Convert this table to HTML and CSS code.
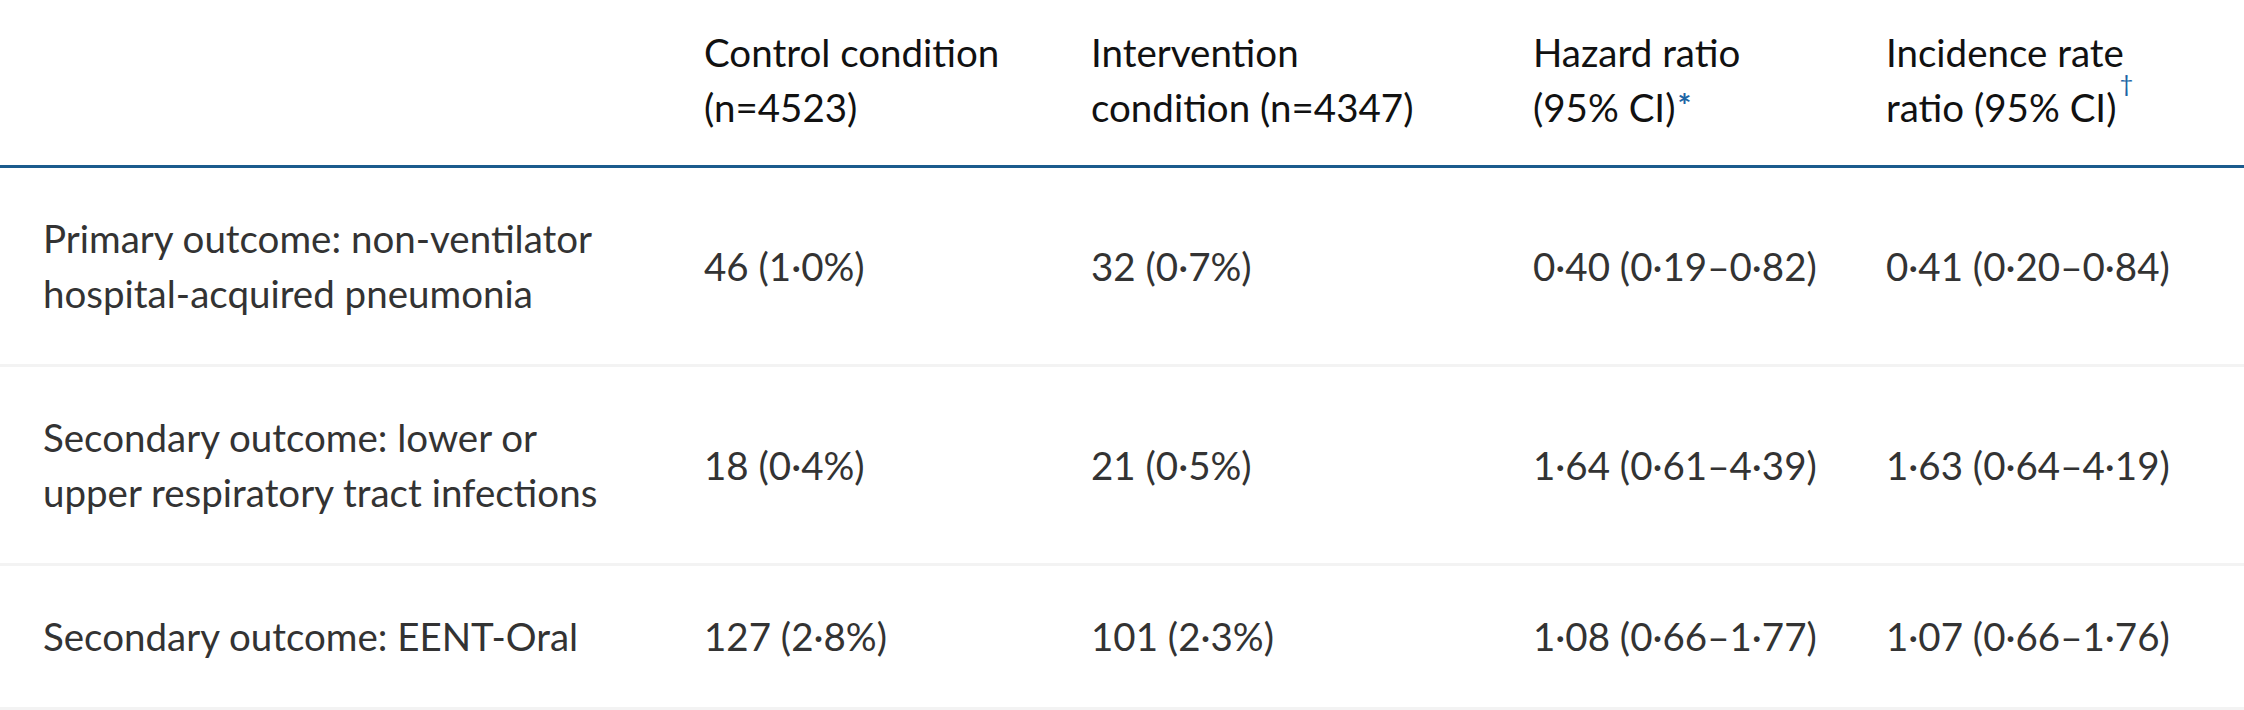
FILE: index.html
```html
<!DOCTYPE html>
<html lang="en">
<head>
<meta charset="utf-8">
<title>Outcomes</title>
<link rel="stylesheet" href="styles.css">
</head>
<body>
<table class="outcomes">
  <colgroup>
    <col class="c-label">
    <col class="c-control">
    <col class="c-interv">
    <col class="c-hr">
    <col class="c-irr">
  </colgroup>
  <thead>
    <tr>
      <th></th>
      <th>Control condition<br>(n=4523)</th>
      <th>Intervention<br>condition (n=4347)</th>
      <th>Hazard ratio<br>(95% CI)<sup class="fn star">*</sup></th>
      <th>Incidence rate<br>ratio (95% CI)<sup class="fn dagger">†</sup></th>
    </tr>
  </thead>
  <tbody>
    <tr>
      <td class="label">Primary outcome: non-ventilator hospital-acquired pneumonia</td>
      <td>46 (1·0%)</td>
      <td>32 (0·7%)</td>
      <td>0·40 (0·19–0·82)</td>
      <td>0·41 (0·20–0·84)</td>
    </tr>
    <tr>
      <td class="label">Secondary outcome: lower or upper respiratory tract infections</td>
      <td>18 (0·4%)</td>
      <td>21 (0·5%)</td>
      <td>1·64 (0·61–4·39)</td>
      <td>1·63 (0·64–4·19)</td>
    </tr>
    <tr>
      <td class="label">Secondary outcome: EENT-Oral</td>
      <td>127 (2·8%)</td>
      <td>101 (2·3%)</td>
      <td>1·08 (0·66–1·77)</td>
      <td>1·07 (0·66–1·76)</td>
    </tr>
  </tbody>
</table>
</body>
</html>
```

FILE: styles.css
```css
html, body {
  margin: 0;
  padding: 0;
  background: #ffffff;
}

body {
  font-family: Lato, "Open Sans", "Liberation Sans", sans-serif;
}

.outcomes {
  width: 100%;
  border-collapse: collapse;
  table-layout: fixed;
}

.c-label { width: 661px; }
.c-control { width: 387px; }
.c-interv { width: 442px; }
.c-hr { width: 353px; }
.c-irr { width: auto; }

.outcomes th,
.outcomes td {
  text-align: left;
  font-size: 38.5px;
  font-weight: 400;
  line-height: 55px;
  padding-left: 43px;
  padding-right: 20px;
  vertical-align: middle;
}

.outcomes th {
  color: #111111;
  padding-top: 25px;
  padding-bottom: 30px;
  border-bottom: 3px solid #1b5b8d;
}

.outcomes td {
  color: #333333;
  padding-top: 43px;
  padding-bottom: 43px;
  border-bottom: 3px solid #f3f3f3;
}

.outcomes td.label {
  padding-right: 48px;
}

.fn {
  color: #1d65a5;
  line-height: 0;
}

.star {
  font-size: 0.85em;
  font-weight: 700;
  vertical-align: 0.12em;
  margin-left: 2px;
}

.dagger {
  font-size: 0.62em;
  vertical-align: 1.25em;
  margin-left: 3px;
}
```
